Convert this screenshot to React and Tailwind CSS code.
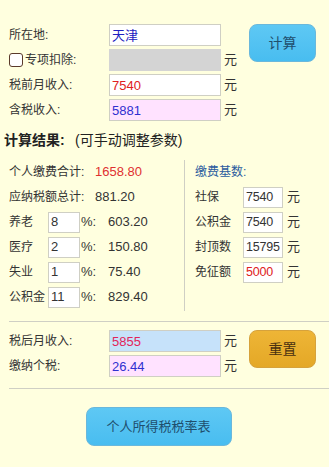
import React from "react";

const F = { fontFamily: '"Liberation Sans", "Noto Sans CJK SC", sans-serif' };

function TopRow({ label, children }) {
  return (
    <div className="flex h-[22px] items-center">
      <div className="w-[100px] shrink-0 text-[12px] text-[#333]">{label}</div>
      {children}
    </div>
  );
}

function Box({ value, cls, w = "w-[112px]", text = "text-[#2020c0]" }) {
  return (
    <div
      className={`${w} h-[22px] shrink-0 border border-[#cfcfc4] ${cls} ${text} flex items-center pl-[2px] text-[13px] leading-none`}
    >
      {value}
    </div>
  );
}

function Yuan({ cls = "ml-[3px]" }) {
  return <span className={`${cls} text-[13px] text-[#333]`}>元</span>;
}

function RateRow({ label, value, amount }) {
  return (
    <div className="flex h-[22px] items-center text-[12px] text-[#333]">
      <div className="w-[39px] shrink-0">{label}</div>
      <div className="flex h-[21px] w-[32px] shrink-0 items-center border border-[#cfcfc4] bg-white pl-[2px] text-[13px] text-[#333]">
        {value}
      </div>
      <div className="w-[28px] shrink-0 pl-[1px] text-[13px]">%:</div>
      <div className="text-[13px]">{amount}</div>
    </div>
  );
}

function BaseRow({ label, value, red }) {
  return (
    <div className="flex h-[22px] items-center text-[12px] text-[#333]">
      <div className="w-[48px] shrink-0">{label}</div>
      <div
        className={`flex h-[21px] w-[40px] shrink-0 items-center overflow-hidden border border-[#cfcfc4] bg-white pl-[2px] text-[12.5px] tracking-[-0.2px] ${red ? "text-[#e02020]" : "text-[#333]"}`}
      >
        {value}
      </div>
      <span className="ml-[4px] text-[13px]">元</span>
    </div>
  );
}

export default function App() {
  return (
    <div style={F} className="h-[467px] w-[329px] overflow-hidden bg-[#ffffdf]">
      {/* top */}
      <div className="flex pt-[24px] pl-[9px]">
        <div className="flex w-[240px] flex-col gap-[3px]">
          <TopRow label="所在地:">
            <Box value="天津" cls="bg-white" text="text-[#2020c0] text-[12px]" />
          </TopRow>
          <div className="flex h-[22px] items-center">
            <div className="flex w-[100px] shrink-0 items-center text-[12px] text-[#333]">
              <span className="mr-[2px] inline-block h-[14px] w-[14px] rounded-[3px] border border-[#5a3a2a] bg-white"></span>
              专项扣除:
            </div>
            <Box value="" cls="bg-[#d4d4d4] border-[#d4d4d4]" />
            <Yuan />
          </div>
          <TopRow label="税前月收入:">
            <Box value="7540" cls="bg-white" text="text-[#e02020]" />
            <Yuan />
          </TopRow>
          <TopRow label="含税收入:">
            <Box value="5881" cls="bg-[#ffe2ff]" text="text-[#3030d0]" />
            <Yuan />
          </TopRow>
        </div>
        <div>
          <button className="flex h-[38px] w-[67px] items-center justify-center rounded-[8px] border border-[#6ab8dc] bg-gradient-to-b from-[#5ec8f4] to-[#48bdf0] text-[14px] text-[#1f4f6e]">
            计算
          </button>
        </div>
      </div>

      {/* heading */}
      <div className="mt-[9px] flex items-center pl-[4px] text-[14px] text-[#222]">
        <span className="w-[71px] font-bold">计算结果:</span>
        <span>(可手动调整参数)</span>
      </div>

      {/* results */}
      <div className="mt-[9px] flex">
        <div className="flex w-[184px] shrink-0 flex-col gap-[3px] pl-[9px] pt-[1px] pb-[3px]">
          <div className="flex h-[22px] items-center text-[12px] text-[#333]">
            <span className="w-[86px]">个人缴费合计:</span>
            <span className="text-[13px] text-[#e03030]">1658.80</span>
          </div>
          <div className="flex h-[22px] items-center text-[12px] text-[#333]">
            <span className="w-[86px]">应纳税额总计:</span>
            <span className="text-[13px]">881.20</span>
          </div>
          <RateRow label="养老" value="8" amount="603.20" />
          <RateRow label="医疗" value="2" amount="150.80" />
          <RateRow label="失业" value="1" amount="75.40" />
          <RateRow label="公积金" value="11" amount="829.40" />
        </div>
        <div className="w-px shrink-0 bg-[#cfcfc4]"></div>
        <div className="flex flex-col gap-[3px] pl-[10px] pt-[1px]">
          <div className="flex h-[22px] items-center text-[12px] text-[#2b5c9e]">缴费基数:</div>
          <BaseRow label="社保" value="7540" />
          <BaseRow label="公积金" value="7540" />
          <BaseRow label="封顶数" value="15795" />
          <BaseRow label="免征额" value="5000" red />
        </div>
      </div>

      <div className="ml-[9px] mt-[10px] h-px bg-[#cfcfc4]"></div>

      {/* bottom */}
      <div className="flex pt-[8px] pl-[9px]">
        <div className="flex w-[240px] flex-col gap-[3px]">
          <TopRow label="税后月收入:">
            <Box value="5855" cls="bg-[#c6e2fa]" text="text-[#e2245a]" />
            <Yuan />
          </TopRow>
          <TopRow label="缴纳个税:">
            <Box value="26.44" cls="bg-[#ffe2ff]" text="text-[#3030d0]" />
            <Yuan />
          </TopRow>
        </div>
        <div>
          <button className="flex h-[38px] w-[67px] items-center justify-center rounded-[8px] border border-[#d6a23c] bg-gradient-to-b from-[#eeb536] to-[#e4a826] text-[14px] text-[#4a3010]">
            重置
          </button>
        </div>
      </div>

      <div className="ml-[9px] mt-[11px] h-px bg-[#cfcfc4]"></div>

      <div className="flex justify-center pt-[18px] pr-[12px]">
        <button className="flex h-[39px] w-[146px] items-center justify-center rounded-[8px] border border-[#6ab8dc] bg-gradient-to-b from-[#5ec8f4] to-[#48bdf0] text-[13px] text-[#1f4f6e]">
          个人所得税税率表
        </button>
      </div>
    </div>
  );
}
